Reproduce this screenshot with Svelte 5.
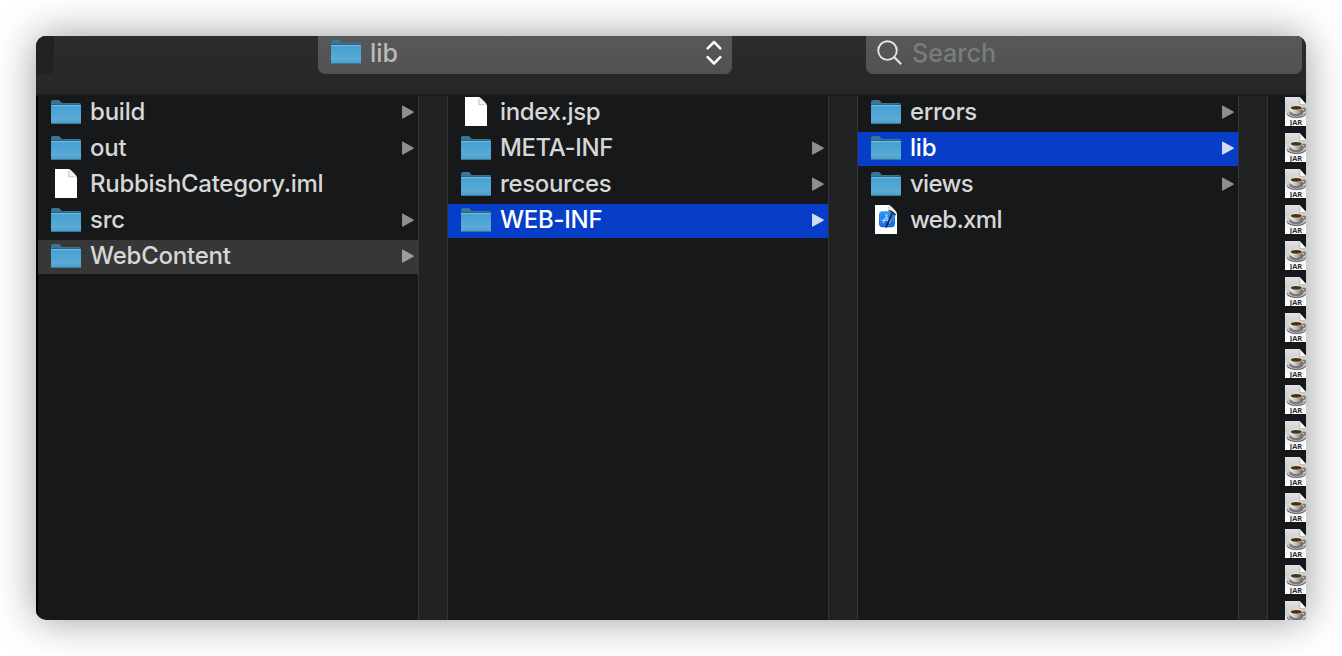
<script>
  const columns = [
    [
      { name: 'build', icon: 'folder', ls: -0.2 },
      { name: 'out', icon: 'folder', ls: -0.2 },
      { name: 'RubbishCategory.iml', icon: 'doc', ls: -0.29 },
      { name: 'src', icon: 'folder', ls: -0.2 },
      { name: 'WebContent', icon: 'folder', ls: -0.22, state: 'path' }
    ],
    [
      { name: 'index.jsp', icon: 'doc', ls: -0.34 },
      { name: 'META-INF', icon: 'folder', ls: -0.4 },
      { name: 'resources', icon: 'folder', ls: -0.35 },
      { name: 'WEB-INF', icon: 'folder', ls: -0.27, state: 'selected' }
    ],
    [
      { name: 'errors', icon: 'folder', ls: -0.4 },
      { name: 'lib', icon: 'folder', ls: -0.2, state: 'selected' },
      { name: 'views', icon: 'folder', ls: -0.7 },
      { name: 'web.xml', icon: 'xml', ls: -0.65 }
    ]
  ];
  const jars = Array.from({ length: 15 }, (_, i) => i);
</script>

<svg class="defs" width="0" height="0" aria-hidden="true">
  <defs>
    <linearGradient id="front" x1="0" y1="0" x2="0" y2="1">
      <stop offset="0" stop-color="#439fd3" />
      <stop offset=".75" stop-color="#5aabd6" />
      <stop offset="1" stop-color="#4d9ac5" />
    </linearGradient>
    <linearGradient id="paper" x1="0" y1="0" x2="0" y2="1">
      <stop offset="0" stop-color="#e2e2e2" />
      <stop offset=".35" stop-color="#d0d0d0" />
      <stop offset=".7" stop-color="#f4f4f4" />
      <stop offset="1" stop-color="#ffffff" />
    </linearGradient>
    <linearGradient id="cup" x1="0" y1="0" x2="1" y2="0">
      <stop offset="0" stop-color="#f5f5f5" />
      <stop offset=".5" stop-color="#bdbdbd" />
      <stop offset="1" stop-color="#666666" />
    </linearGradient>
    <linearGradient id="tile" x1="0" y1="0" x2="0" y2="1">
      <stop offset="0" stop-color="#2c9bfa" />
      <stop offset="1" stop-color="#0b58dc" />
    </linearGradient>
  </defs>
</svg>

{#snippet folder()}
  <svg class="folder" width="30" height="25" viewBox="0 0 30 25">
    <path d="M0 2Q0 0 2 0H7.5C9.5 0 9.5 3 11.5 3H28.5Q30 3 30 4.5V8H0Z" fill="#397696" />
    <path d="M0 4.5H30" stroke="#2c617d" stroke-width="1" />
    <path d="M0 5H30V22.5Q30 24 28.5 24H1.5Q0 24 0 22.5Z" fill="url(#front)" />
    <path d="M.3 5.6H29.7" stroke="#76bfe5" stroke-width="1" />
    <path d="M.5 23.5H29.5" stroke="#397ca2" stroke-width="1" />
  </svg>
{/snippet}

{#snippet doc(xml)}
  <svg class="doc" width="22" height="29" viewBox="0 0 22 29">
    <path d="M0 0H13.5C16 .8 21.2 6 22 8.8V29H0Z" fill="#fff" />
    <path d="M13.5 0C14 2.5 14 5 13.6 7.8C17 7.2 20 7.5 22 8.8C21.2 6 16 .8 13.5 0Z" fill="#f1f1f1" />
    <path d="M13.8 2V7.7H19" fill="none" stroke="#b5b5b5" stroke-width=".8" />
    {#if xml}
      <rect x="4" y="6.2" width="16" height="16" rx="3.6" fill="url(#tile)" />
      <rect x="5.6" y="7.8" width="12.8" height="12.8" rx="2.4" fill="none" stroke="#3f9df9" stroke-width=".6" />
      <path d="M12 10L8.3 17.6M10.8 10L14.8 17.6M7.2 15.3H16" stroke="#8ecbff" stroke-width="1.6" stroke-linecap="round" />
      <path d="M17.4 8L11.2 21.8" stroke="#22252b" stroke-width="1.8" stroke-linecap="round" />
      <path d="M13.2 4.9L16 5.4L21.4 9.6L20.4 10.4L16.7 8.5Z" fill="#33363b" />
    {/if}
  </svg>
{/snippet}

{#snippet jar(labelled)}
  <svg class="jar" width="22" height="29" viewBox="0 0 22 29">
    <path d="M0 0H14.5L22 8V29H0Z" fill="url(#paper)" />
    <path d="M14.5 0C15.3 3 15.2 5.5 14.8 7.7C18 6.8 20 7 22 8Z" fill="#fff" />
    <path d="M14.8 1.5V7.7H20" fill="none" stroke="#999" stroke-width=".6" />
    <ellipse cx="11.4" cy="16.2" rx="9.7" ry="4.9" fill="#686868" />
    <ellipse cx="11.4" cy="15.3" rx="9.5" ry="4.5" fill="#c9c9c9" />
    <ellipse cx="11.4" cy="16" rx="7" ry="3.3" fill="#777" />
    <path d="M16.5 11.3C21.4 10.2 21.9 14 16.5 14.6" fill="none" stroke="#666" stroke-width="1.3" />
    <path d="M4.7 10.4C4.7 19.2 17.9 19.2 17.9 10.4Z" fill="url(#cup)" />
    <ellipse cx="11.3" cy="10.5" rx="6.6" ry="2.7" fill="#dedede" />
    <ellipse cx="11.3" cy="10.8" rx="5.4" ry="1.9" fill="#50300c" />
    {#if labelled}
      <text x="11" y="27.8" text-anchor="middle" textLength="12.4" lengthAdjust="spacingAndGlyphs">JAR</text>
    {/if}
  </svg>
{/snippet}

<div class="stage">
  <div class="window">
    <header>
      <div class="segment"></div>
      <div class="popup">
        {@render folder()}
        <span>lib</span>
        <svg class="updown" width="16" height="26" viewBox="0 0 16 26">
          <path d="M1.7 8.3L8 2L14.3 8.3M1.7 17.2L8 23.5L14.3 17.2" fill="none" stroke="#fff" stroke-width="2.5" stroke-linecap="round" stroke-linejoin="round" />
        </svg>
      </div>
      <div class="search">
        <svg width="26" height="26" viewBox="0 0 26 26">
          <circle cx="10.5" cy="10.6" r="9.3" fill="none" stroke="#e4e4e4" stroke-width="1.9" />
          <path d="M17 17L24.2 24.2" stroke="#e4e4e4" stroke-width="2.2" />
        </svg>
        <span>Search</span>
      </div>
    </header>
    <main>
      {#each columns as rows}
        <div class="column">
          {#each rows as row}
            <div class="row {row.state ?? ''}">
              <div class="icon">
                {#if row.icon === 'folder'}
                  {@render folder()}
                {:else}
                  {@render doc(row.icon === 'xml')}
                {/if}
              </div>
              <span class="name" style="letter-spacing: {row.ls}px">{row.name}</span>
              {#if row.icon === 'folder'}
                <svg class="arrow" width="12" height="15" viewBox="0 0 12 15">
                  <path d="M.7 1.2L11.1 7.1L.7 13Z" fill="currentColor" stroke="currentColor" stroke-width="1.3" stroke-linejoin="round" />
                </svg>
              {/if}
            </div>
          {/each}
        </div>
        <div class="gutter"></div>
      {/each}
      <div class="jars">
        {#each jars as n (n)}
          <div class="jarrow">{@render jar(n < jars.length - 1)}</div>
        {/each}
      </div>
    </main>
  </div>
</div>

<style>
  :global(body) {
    margin: 0;
    background: #fff;
    overflow: hidden;
  }
  .defs {
    position: absolute;
  }
  .stage {
    box-sizing: border-box;
    width: 1342px;
    height: 656px;
    padding: 36px;
    overflow: hidden;
    font-family: Inter, "Liberation Sans", sans-serif;
    font-size: 24px;
    font-weight: 450;
    color: #d6d7d7;
  }
  svg {
    display: block;
    flex: none;
  }
  .window {
    width: 1270px;
    height: 584px;
    display: flex;
    flex-direction: column;
    border-radius: 10px 10px 3px 10px;
    overflow: hidden;
    background: #17181a;
    box-shadow: 0 0 42px rgba(0, 0, 0, 0.4);
  }
  header {
    box-sizing: border-box;
    height: 60px;
    flex: none;
    display: flex;
    align-items: flex-start;
    background: linear-gradient(#2b2d2e, #282a29 50%, #262626);
    border-bottom: 2px solid #1b1b1c;
  }
  .segment {
    width: 18px;
    height: 38px;
    background: #212121;
    border-radius: 0 0 6px 0;
  }
  .popup,
  .search {
    box-sizing: border-box;
    height: 38px;
    display: flex;
    border-radius: 0 0 7px 7px;
    background: linear-gradient(#565859, #505152);
    font-size: 25px;
  }
  .popup {
    width: 414px;
    margin-left: 264px;
    padding: 4px 10px 0 13px;
    color: #b9baba;
  }
  .popup span {
    margin-left: 9px;
    line-height: 26px;
    flex: 1;
  }
  .search {
    width: 436px;
    margin-left: 134px;
    border-radius: 0 4px 7px 7px;
    padding: 4px 0 0 11px;
    color: #7a7c7c;
  }
  .search span {
    margin-left: 9px;
    line-height: 26px;
  }
  main {
    flex: 1;
    min-height: 0;
    display: flex;
    border-left: 2px solid #000;
  }
  .column {
    width: 380px;
    flex: none;
    display: flex;
    flex-direction: column;
    gap: 2px;
  }
  .row {
    height: 34px;
    display: flex;
    padding-left: 13px;
    padding-right: 4px;
  }
  .icon {
    width: 30px;
    padding-top: 4px;
  }
  .doc {
    margin: -3px 0 0 4px;
  }
  .name {
    flex: 1;
    margin-left: 9px;
    line-height: 32px;
    white-space: nowrap;
  }
  .arrow {
    margin-top: 9px;
    color: #8d8e8e;
  }
  .path {
    background: #373737;
  }
  .path .arrow {
    color: #9e9e9e;
  }
  .selected {
    background: #063ec7;
    color: #fff;
  }
  .selected .arrow {
    color: #d2dcf5;
  }
  .gutter {
    box-sizing: border-box;
    width: 30px;
    flex: none;
    background: #212224;
    border-left: 1px solid #343536;
    border-right: 1px solid #343536;
  }
  .jars {
    flex: 1;
    min-width: 0;
    padding: 1px 0 0 17px;
    overflow: hidden;
  }
  .jarrow {
    height: 36px;
  }
  .jar text {
    font: 700 7.5px "Open Sans", sans-serif;
    fill: #303030;
  }
</style>
